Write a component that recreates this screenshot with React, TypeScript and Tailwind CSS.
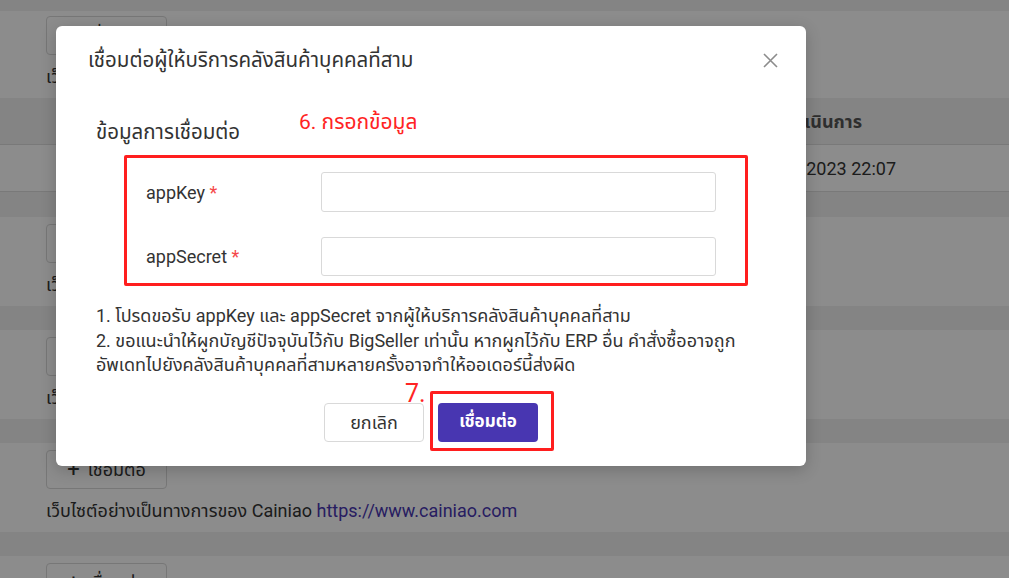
const font = { fontFamily: 'Roboto, "Noto Sans", "Noto Sans Thai", sans-serif' };

const ProviderCard = ({ text, link }: { text: string; link?: string }) => {
    return (
        <div className="h-[89px] bg-white px-[46px] pt-[7px]">
            <button className="flex h-[39px] w-[121px] items-center justify-center gap-2 rounded-[4px] border border-[#d9d9d9] text-[18px] text-[#333]">
                <span className="text-[22px] leading-none">+</span>
                <span>เชื่อมต่อ</span>
            </button>
            <p className="mt-[11px] text-[18px] leading-[22px] whitespace-nowrap text-[#333]">
                {text} {link && <span className="text-[#4836b1]">{link}</span>}
            </p>
        </div>
    );
};

const App = () => {
    return (
        <div className="relative h-[578px] w-[1009px] overflow-hidden bg-[#f0f0f0]" style={font}>
            {/* page behind the dialog */}
            <div className="flex flex-col pt-[11px]">
                <div className="bg-white">
                    <div className="px-[46px] pt-[5px] pb-[10px]">
                        <button className="flex h-[39px] w-[121px] items-center justify-center gap-2 rounded-[4px] border border-[#d9d9d9] text-[18px] text-[#333]">
                            <span className="text-[22px] leading-none">+</span>
                            <span>เชื่อมต่อ</span>
                        </button>
                        <p className="mt-[11px] text-[18px] leading-[22px] whitespace-nowrap text-[#333]">
                            เว็บไซต์อย่างเป็นทางการของ WMS <span className="text-[#4836b1]">https://www.wms.com</span>
                        </p>
                    </div>
                    <div className="flex h-[46px] items-center bg-[#f0f0f0]">
                        <div className="w-[862px] text-right text-[18px] font-bold whitespace-nowrap text-[#555]">เวลาดำเนินการ</div>
                    </div>
                    <div className="flex h-[48px] items-center border-t border-b border-[#dcdcdc]">
                        <div className="w-[896px] text-right text-[18px] whitespace-nowrap text-[#333]">15/03/2023 22:07</div>
                    </div>
                </div>
                <div className="mt-[25px] flex flex-col gap-[24px]">
                    <ProviderCard text="เว็บไซต์อย่างเป็นทางการของ iShip" link="https://www.iship.com" />
                    <ProviderCard text="เว็บไซต์อย่างเป็นทางการของ Flash" link="https://www.flashfulfillment.co.th" />
                    <ProviderCard text="เว็บไซต์อย่างเป็นทางการของ Cainiao" link="https://www.cainiao.com" />
                    <ProviderCard text="เว็บไซต์อย่างเป็นทางการของ Shipa" link="https://www.shipa.com" />
                </div>
            </div>

            {/* mask */}
            <div className="absolute inset-0 bg-black/45"></div>

            {/* dialog */}
            <div className="absolute top-[26px] left-[56px] flex h-[440px] w-[750px] flex-col rounded-[6px] bg-white shadow-[0_4px_16px_rgba(0,0,0,0.2)]">
                <div className="flex items-center justify-between pt-[22px] pr-[28px] pl-[32px]">
                    <h3 className="text-[20.5px] leading-[24px] text-[#333]">เชื่อมต่อผู้ให้บริการคลังสินค้าบุคคลที่สาม</h3>
                    <svg width="15" height="15" viewBox="0 0 15 15" className="text-[#8c8c8c]">
                        <path d="M1 1L14 14M14 1L1 14" stroke="currentColor" strokeWidth="1.6" />
                    </svg>
                </div>

                <div className="relative mt-[48px] pl-[40px]">
                    <div className="text-[20.5px] leading-[24px] text-[#333]">ข้อมูลการเชื่อมต่อ</div>
                    <span className="absolute top-[-10px] left-[243px] text-[21px] leading-[24px] text-[#ff2424]">6. กรอกข้อมูล</span>

                    <div className="mt-[11px] ml-[28px] w-[624px] rounded-[2px] border-[3px] border-[#ff1e1e] pt-[14px] pr-[29px] pb-[7px] pl-[19px]">
                        <div className="flex items-center">
                            <label className="w-[175px] text-[18px] text-[#333]">
                                appKey <span className="text-[#f5484a]">*</span>
                            </label>
                            <input className="h-[40px] w-[395px] rounded-[3px] border border-[#d9d9d9] px-3 outline-none" />
                        </div>
                        <div className="mt-[25px] flex items-center">
                            <label className="w-[175px] text-[18px] text-[#333]">
                                appSecret <span className="text-[#f5484a]">*</span>
                            </label>
                            <input className="h-[39px] w-[395px] rounded-[3px] border border-[#d9d9d9] px-3 outline-none" />
                        </div>
                    </div>

                    <div className="mt-[18px] text-[18px] leading-[24.5px] whitespace-nowrap text-[#333]">
                        <p>1. โปรดขอรับ appKey และ appSecret จากผู้ให้บริการคลังสินค้าบุคคลที่สาม</p>
                        <p>2. ขอแนะนำให้ผูกบัญชีปัจจุบันไว้กับ BigSeller เท่านั้น หากผูกไว้กับ ERP อื่น คำสั่งซื้ออาจถูก</p>
                        <p>อัพเดทไปยังคลังสินค้าบุคคลที่สามหลายครั้งอาจทำให้ออเดอร์นี้ส่งผิด</p>
                    </div>
                </div>

                <div className="mt-[25px] flex justify-center gap-[14px]">
                    <button className="h-[39px] w-[100px] rounded-[4px] border border-[#d9d9d9] text-[18px] text-[#333]">ยกเลิก</button>
                    <div className="relative">
                        <span className="absolute top-[-22px] left-[-33px] text-[25px] leading-[26px] text-[#ff2424]">7.</span>
                        <div className="absolute top-[-12px] left-[-8px] h-[60px] w-[124px] rounded-[2px] border-[3px] border-[#ff1e1e]"></div>
                        <button className="relative h-[39px] w-[100px] rounded-[4px] bg-[#4836b1] text-[17px] font-bold text-white">เชื่อมต่อ</button>
                    </div>
                </div>
            </div>
        </div>
    );
};

export default App;
